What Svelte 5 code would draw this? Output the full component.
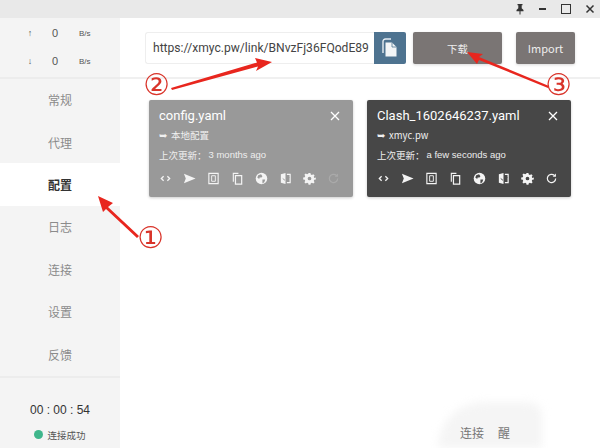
<script>
  const nav = ['常规', '代理', '配置', '日志', '连接', '设置', '反馈'];
  const active = 2;
  const cards = [
    { name: 'config.yaml', src: '本地配置', time: '3 months ago', dark: false },
    { name: 'Clash_1602646237.yaml', src: 'xmyc.pw', time: 'a few seconds ago', dark: true }
  ];
</script>

<div class="window">
  <header class="titlebar">
    <svg class="tb" width="10" height="12" viewBox="0 0 10 12"><path d="M2.500 1h5v1.200H6.700v3L8.500 7v1.200H5.500v3.300h-1V8.200H1.500V7l1.800-1.800v-3H2.500z" fill="#333"/></svg>
    <span class="min"></span>
    <span class="max"></span>
    <svg class="tb" width="10" height="10" viewBox="0 0 10 10"><path d="M1.500 1.500l7 7M8.500 1.500l-7 7" stroke="#333" stroke-width="1.500"/></svg>
  </header>

  <div class="body">
    <aside class="sidebar">
      <div class="speed">
        <div class="speed-row"><span>↑</span><b>0</b><i>B/s</i></div>
        <div class="speed-row"><span>↓</span><b>0</b><i>B/s</i></div>
      </div>
      <nav class="nav">
        {#each nav as item, i}
          <div class="nav-item" class:active={i === active} class:before={i === active - 1} class:after={i === active + 1}>{item}</div>
        {/each}
      </nav>
      <div class="status">
        <div class="timer">00 : 00 : 54</div>
        <div class="conn"><span class="dot"></span>连接成功</div>
      </div>
    </aside>

    <main class="main">
      <section class="toolbar">
        <div class="url-group">
          <div class="url">https://xmyc.pw/link/BNvzFj36FQodE89</div>
          <div class="paste">
            <svg width="16" height="20" viewBox="0 0 16 20"><path d="M1 15V3.500C1 2 2 1 3.500 1H9" fill="none" stroke="#e6edf3" stroke-width="1.400"/><path d="M3.500 4.500h6.500l4.500 4.500v9.500h-11z" fill="#f2f5f7"/><path d="M10 4.500v4.500h4.500" fill="none" stroke="#4e7390" stroke-width="0.800"/></svg>
          </div>
        </div>
        <button class="btn download">下载</button>
        <button class="btn import">Import</button>
      </section>

      <section class="cards">
        {#each cards as c}
          <article class="card" class:dark={c.dark}>
            <div class="card-head">
              <span class="card-name">{c.name}</span>
              <svg width="10" height="10" viewBox="0 0 10 10"><path d="M1 1l8 8M9 1l-8 8" stroke="#fff" stroke-width="1.300"/></svg>
            </div>
            <div class="card-src"><span class="share">➥</span>{c.src}</div>
            <div class="card-time"><span>上次更新：</span><span>{c.time}</span></div>
            <div class="card-icons">
              <svg viewBox="0 0 14 14"><path d="M5 4.500L2.500 7 5 9.500M9 4.500L11.500 7 9 9.500" fill="none" stroke="currentColor" stroke-width="1.400"/></svg>
              <svg viewBox="0 0 14 14"><path d="M1 2l12.500 5L1 12l2-5z" fill="currentColor"/></svg>
              <svg viewBox="0 0 14 14"><path d="M2 1.500h10v11H2z" fill="none" stroke="currentColor" stroke-width="1.200"/><path d="M5 4h4v6H5z" fill="none" stroke="currentColor" stroke-width="1"/></svg>
              <svg viewBox="0 0 14 14"><path d="M2.500 10.500V1.500H8" fill="none" stroke="currentColor" stroke-width="1.200"/><path d="M4.800 3.800h6.700v9.200H4.800z" fill="none" stroke="currentColor" stroke-width="1.300"/></svg>
              <svg viewBox="0 0 14 14"><circle cx="7" cy="7" r="6.200" fill="currentColor"/><path d="M3.500 3.500l3-1 1.500 2-1 1.500H5l-.5 1.500-2-1.500zM8 8h3l-1 3-2 1.500z" class="cut"/></svg>
              <svg viewBox="0 0 14 14"><path d="M2 2.500L7 1v12l-5-1.500z" fill="currentColor"/><path d="M8.500 2.500H12v9H8.500" fill="none" stroke="currentColor" stroke-width="1.300"/><path d="M4 7l2.500 2M9 8l2-2" class="cutline"/></svg>
              <svg viewBox="0 0 14 14"><path fill-rule="evenodd" d="M6 1h2l.4 1.700 1.200.5 1.500-.9 1.400 1.400-.9 1.500.5 1.200L13.800 6v2l-1.700.4-.5 1.200.9 1.500-1.400 1.400-1.500-.9-1.200.5L8 13.800H6l-.4-1.700-1.200-.5-1.500.9-1.400-1.400.9-1.500-.5-1.200L.2 8V6l1.700-.4.5-1.200-.9-1.500 1.400-1.400 1.500.9 1.200-.5zM7 5a2 2 0 100 4 2 2 0 000-4z" fill="currentColor"/></svg>
              <svg class="refresh" viewBox="0 0 14 14"><path d="M11.500 7a4.500 4.500 0 11-1.300-3.200" fill="none" stroke="currentColor" stroke-width="1.300"/><path d="M11.800 1.500v3.500H8.300z" fill="currentColor"/></svg>
            </div>
          </article>
        {/each}
      </section>

      <div class="smudge"></div>
      <div class="ghost"><span>连接</span><span>醒</span></div>
    </main>
  </div>

  <svg class="arrows" width="600" height="448" viewBox="0 0 600 448">
    <g fill="#e8261e">
      <path d="M139 236L108 207L113 203L98 196L103 212L106 209L137 238z"/>
      <path d="M172 90L258 66.500L256 71L272 62L255 58L257 62.500L171 88z"/>
      <path d="M549 86L479 57L483 54L467 52L477 64L479 60L548 88z"/>
    </g>
  </svg>
  <span class="mark m1">①</span>
  <span class="mark m2">②</span>
  <span class="mark m3">③</span>
</div>

<style>
  :global(body) { margin: 0; background: #fff; }
  .window {
    position: relative;
    width: 600px;
    height: 448px;
    overflow: hidden;
    background: #fff;
    color: #444;
    font-family: "Noto Sans CJK SC", "Noto Sans", sans-serif;
  }
  .titlebar {
    height: 18px;
    background: #e9e9e9;
    display: flex;
    justify-content: flex-end;
    align-items: center;
    gap: 12px;
    padding-right: 5px;
    box-sizing: border-box;
  }
  .tb { display: block; }
  .min { width: 7px; height: 1.500px; background: #333; margin-left: 2px; }
  .max { width: 8px; height: 8px; border: 1.500px solid #333; margin: 0 2px 0 3px; }
  .body { display: flex; height: 430px; }
  .sidebar {
    width: 120px;
    flex: none;
    background: #f4f4f4;
    display: flex;
    flex-direction: column;
  }
  .speed {
    height: 60.500px;
    padding-top: 1px;
    box-sizing: border-box;
    border-bottom: 2px solid #ececec;
  }
  .speed-row {
    height: 28px;
    display: grid;
    grid-template-columns: 46px 18px 1fr;
    align-items: center;
    font-family: "Liberation Sans", sans-serif;
    color: #555;
  }
  .speed-row span { text-align: center; padding-left: 14px; font-size: 9px; }
  .speed-row b { font-weight: 400; font-size: 11px; text-align: center; }
  .speed-row i { font-style: normal; font-size: 8px; margin-left: 15px; }
  .nav { height: 297px; display: flex; flex-direction: column; }
  .nav-item {
    height: 42.400px;
    display: flex;
    align-items: center;
    justify-content: center;
    font-size: 12px;
    color: #8b8b8b;
    background: #f4f4f4;
  }
  .nav-item.before { border-bottom-right-radius: 10px; }
  .nav-item.after { border-top-right-radius: 10px; }
  .nav-item.active { background: #fff; color: #333; font-weight: 700; }
  .status {
    flex: 1;
    border-top: 2px solid #ececec;
    display: flex;
    flex-direction: column;
    align-items: center;
    padding-top: 24px;
  }
  .timer { font-family: "Liberation Sans", sans-serif; font-size: 12px; color: #333; line-height: 16px; }
  .conn { margin-top: 10px; font-size: 9.500px; line-height: 14px; color: #555; display: flex; align-items: center; gap: 4px; }
  .dot { width: 9px; height: 9px; border-radius: 50%; background: #3fb68b; }
  .main { flex: 1; position: relative; min-width: 0; }
  .toolbar {
    height: 61px;
    box-sizing: border-box;
    border-bottom: 2px solid #f0f0f0;
    display: flex;
    align-items: flex-start;
    padding: 14px 0 0 25px;
  }
  .url-group { display: flex; height: 32px; width: 261px; }
  .url {
    width: 229px;
    box-sizing: border-box;
    border: 1px solid #eee;
    border-right: 0;
    border-radius: 3px 0 0 3px;
    padding-left: 7px;
    font-family: Roboto, sans-serif;
    font-size: 12.100px;
    line-height: 30px;
    color: #444;
    white-space: nowrap;
    overflow: hidden;
  }
  .paste {
    width: 32px;
    background: #4e7390;
    border-radius: 0 2px 2px 0;
    display: flex;
    align-items: center;
    justify-content: center;
  }
  .btn {
    height: 32px;
    background: #7a7574;
    color: #eee;
    border: 0;
    border-radius: 2px;
    font-size: 10.500px;
    box-shadow: 0 1px 3px rgba(0,0,0,.15);
    padding: 0;
    font-family: "Noto Sans CJK SC", "Noto Sans", sans-serif;
  }
  .download { width: 89px; margin-left: 7px; }
  .import { width: 59px; margin-left: 14px; font-size: 11px; }
  .cards { display: flex; gap: 14px; padding: 21px 0 0 29px; }
  .card {
    width: 204px;
    height: 97px;
    box-sizing: border-box;
    background: #999;
    color: #fff;
    border-radius: 2px;
    padding: 7px 10px 0;
    box-shadow: 0 1px 3px rgba(0,0,0,.2);
  }
  .card.dark { background: #474747; }
  .card-head { display: flex; justify-content: space-between; align-items: center; font-family: Roboto, sans-serif; font-size: 13px; line-height: 17px; padding-right: 3px; }
  .card-src { font-size: 9.500px; line-height: 14px; margin-top: 4px; color: #f0f0f0; display: flex; gap: 3px; }
  .share { width: 9px; }
  .card-time { font-size: 9.500px; line-height: 14px; margin-top: 6px; display: flex; gap: 2px; color: #eee; }
  .card-time span:last-child { font-family: "Liberation Sans", sans-serif; }
  .card-icons { display: flex; justify-content: space-between; margin-top: 10px; padding-right: 3px; }
  .card-icons svg { width: 13px; height: 13px; display: block; color: #f4f4f4; }
  .cut { fill: #999; }
  .dark .cut { fill: #474747; }
  .cutline { stroke: #999; stroke-width: 1; fill: none; }
  .dark .cutline { stroke: #474747; }
  .card:not(.dark) .refresh { color: #aaa; }
  .smudge {
    position: absolute;
    left: 318px;
    bottom: 0;
    width: 104px;
    height: 46px;
    background: #f5f5f5;
    border-radius: 70px 20px 0 0;
    filter: blur(4px);
  }
  .ghost {
    position: absolute;
    left: 340px;
    top: 407px;
    display: flex;
    gap: 14px;
    font-size: 12px;
    line-height: 16px;
    color: #777;
  }
  .arrows { position: absolute; inset: 0; pointer-events: none; }
  .mark {
    position: absolute;
    font-family: "DejaVu Sans", sans-serif;
    font-size: 26px;
    line-height: 30px;
    color: #d9342a;
    transform: scale(1.150);
  }
  .m1 { left: 139px; top: 223px; }
  .m2 { left: 145px; top: 70px; }
  .m3 { left: 547px; top: 70px; }
</style>
